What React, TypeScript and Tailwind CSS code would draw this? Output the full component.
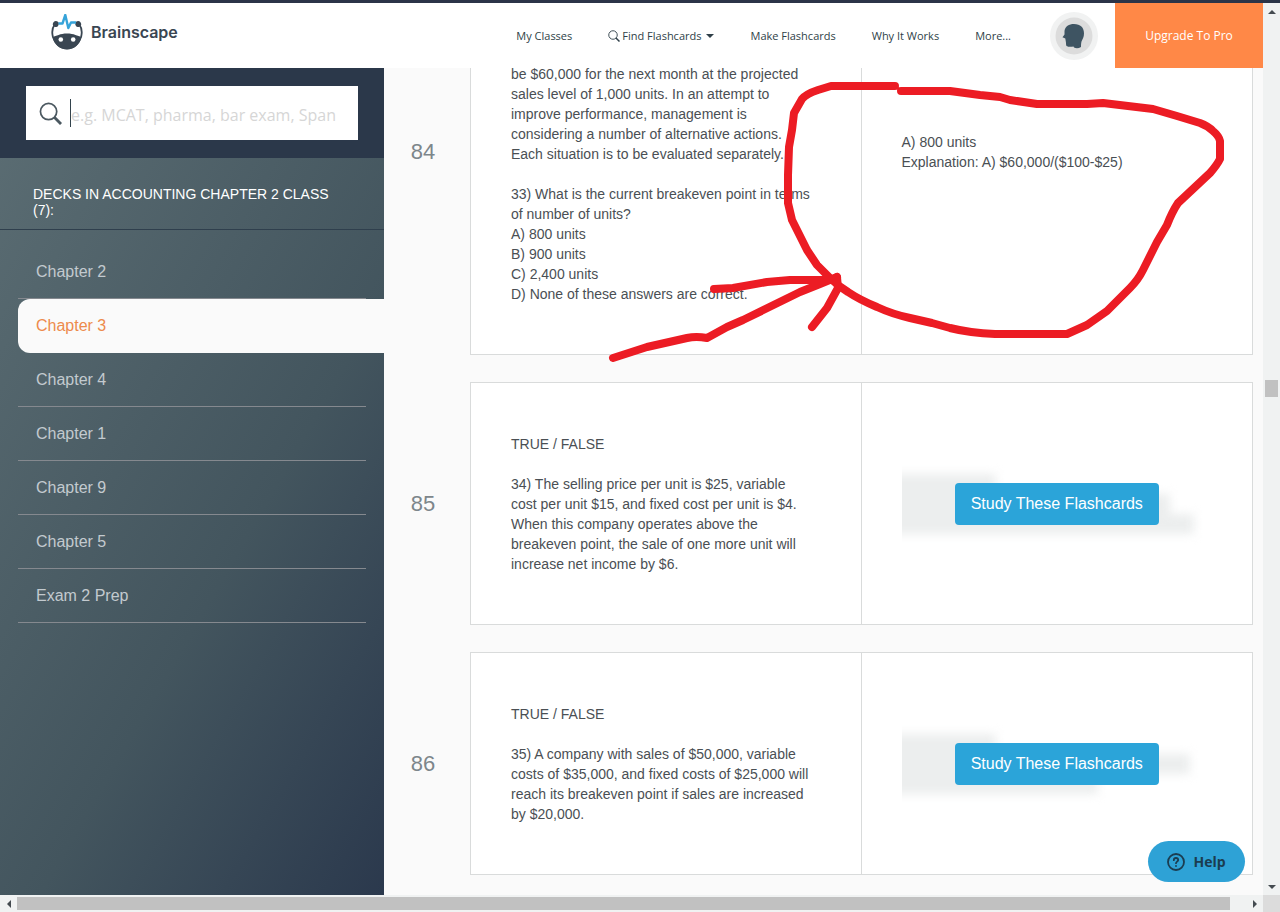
import { useState } from 'react'
import type { ReactNode } from 'react'

type Deck = {
  id: number
  name: string
}

type Flashcard = {
  number: number
  question: string
  answer?: string
  // widths of the blurred lines shown while the answer is locked
  preview?: string[]
}

const decks: Deck[] = [
  { id: 2, name: 'Chapter 2' },
  { id: 3, name: 'Chapter 3' },
  { id: 4, name: 'Chapter 4' },
  { id: 1, name: 'Chapter 1' },
  { id: 9, name: 'Chapter 9' },
  { id: 5, name: 'Chapter 5' },
  { id: 10, name: 'Exam 2 Prep' },
]

const flashcards: Flashcard[] = [
  {
    number: 84,
    question: `be $60,000 for the next month at the projected
sales level of 1,000 units. In an attempt to
improve performance, management is
considering a number of alternative actions.
Each situation is to be evaluated separately.

33) What is the current breakeven point in terms
of number of units?
A) 800 units
B) 900 units
C) 2,400 units
D) None of these answers are correct.`,
    answer: `A) 800 units
Explanation: A) $60,000/($100-$25)`,
  },
  {
    number: 85,
    question: `TRUE / FALSE

34) The selling price per unit is $25, variable
cost per unit $15, and fixed cost per unit is $4.
When this company operates above the
breakeven point, the sale of one more unit will
increase net income by $6.`,
    preview: ['w-[106px]', 'w-[280px]', 'w-[304px]'],
  },
  {
    number: 86,
    question: `TRUE / FALSE

35) A company with sales of $50,000, variable
costs of $35,000, and fixed costs of $25,000 will
reach its breakeven point if sales are increased
by $20,000.`,
    preview: ['w-[106px]', 'w-[300px]', 'w-[208px]'],
  },
]

const Logo = () => (
  <svg viewBox="0 0 32 36" className="w-8 h-9" aria-hidden="true">
    <path
      d="M4 10C1 14 .7 18 1.800 22.500C4 30 9.500 34.500 16 34.500S28 30 30.200 22.500C31.300 18 31 14 28 10"
      fill="none"
      stroke="#3a4652"
      strokeWidth="1.800"
    />
    <path
      d="M1.500 23C5.500 22 9 19.500 16 19.500S26.500 22 30.500 23C29 30.500 23 35.300 16 35.300S3 30.500 1.500 23Z"
      fill="#3a4652"
    />
    <ellipse cx="4.800" cy="10" rx="2.900" ry="3" transform="rotate(25 4.800 10)" fill="#3a4652" />
    <ellipse cx="27.200" cy="10" rx="2.900" ry="3" transform="rotate(-25 27.200 10)" fill="#3a4652" />
    <circle cx="9.800" cy="25.500" r="2.300" fill="#fff" />
    <circle cx="22.200" cy="25.500" r="2.300" fill="#fff" />
    <path
      d="M7.500 9.500H11.500L14.300 1L17.300 14L20 8.500H25"
      fill="none"
      stroke="#36a3d9"
      strokeWidth="2.400"
      strokeLinejoin="round"
    />
  </svg>
)

const Magnifier = ({ className, thick }: { className: string; thick: number }) => (
  <svg viewBox="0 0 24 24" className={className} fill="none" stroke="currentColor" aria-hidden="true">
    <circle cx="10" cy="10" r="8.500" strokeWidth="1.800" />
    <path d="M16 16L23 23" strokeWidth={thick} />
  </svg>
)

const Avatar = () => (
  <svg viewBox="0 0 48 48" className="size-12" aria-hidden="true">
    <circle cx="24" cy="24" r="24" fill="#f1f2f2" />
    <circle cx="24" cy="24" r="18.500" fill="#dcdcdc" />
    <path
      d="M14.500 19C15 14.500 19 12 24 12C30.500 12 34 15.500 34 21.500C34 25 32.500 27 31.500 29.500C31 31.500 31 33.500 31 35C28.500 36.500 26 36.500 24 35.500L23.500 34.500C21 35 18 35 16.500 34C15.800 32.500 16.200 31 15.800 29.500L15.300 26.500L12.500 25.200L14.500 22.500Z"
      fill="#3e5462"
    />
  </svg>
)

const Header = () => (
  <header className="relative z-10 h-[65px] shrink-0 flex items-center bg-white text-[11px] text-[#2f3f48] font-['Open_Sans','Noto_Sans',sans-serif]">
    <a href="#home" className="flex items-center gap-2 pl-[51px] pb-[7px]">
      <Logo />
      <span className="text-base font-semibold text-[#3a4652] font-['Inter',sans-serif]">
        Brainscape
      </span>
    </a>

    <nav className="ml-auto flex items-center gap-9 pr-[39px] pt-px">
      <a href="#classes">My Classes</a>
      <a href="#find" className="flex items-center">
        <Magnifier className="size-3 mr-[2px]" thick={3} />
        Find Flashcards
        <svg viewBox="0 0 8 4" className="w-2 h-1 ml-[5px]" aria-hidden="true">
          <path d="M0 0H8L4 4Z" fill="currentColor" />
        </svg>
      </a>
      <a href="#make">Make Flashcards</a>
      <a href="#why">Why It Works</a>
      <a href="#more">More...</a>
    </nav>

    <button type="button" aria-label="Account" className="mr-[17px]">
      <Avatar />
    </button>
    <a
      href="#pro"
      className="self-stretch w-[148px] flex items-center justify-center bg-[#ff8847] text-white text-xs"
    >
      Upgrade To Pro
    </a>
  </header>
)

const Sidebar = () => {
  const [search, setSearch] = useState('')
  const [active, setActive] = useState(3)

  return (
    <aside className="w-96 shrink-0 flex flex-col bg-linear-120 from-[#5c6e74] via-[#43555e] via-60% to-[#2b394d]">
      <div className="bg-[#2b384a] py-[18px] px-[26px]">
        <label className="h-[54px] flex items-center bg-white pl-[13px] pr-5 text-[#4b5860]">
          <Magnifier className="size-[23px]" thick={3} />
          <span className="ml-2 h-7 border-l border-[#33434d]" />
          <input
            type="text"
            aria-label="Search flashcards"
            placeholder="e.g. MCAT, pharma, bar exam, Span"
            value={search}
            onChange={(e) => setSearch(e.target.value)}
            className="flex-1 min-w-0 pt-1 outline-none text-base placeholder:text-[#d6d6d6] font-['Open_Sans','Noto_Sans',sans-serif]"
          />
        </label>
      </div>

      <h2 className="pt-7 pb-[11px] pl-[33px] pr-10 border-b border-[#2f3f4d] text-sm leading-4 text-white">
        DECKS IN ACCOUNTING CHAPTER 2 CLASS
        <br />
        (7):
      </h2>

      <ul className="pt-[15px] pl-[18px]">
        {decks.map((deck) => (
          <li key={deck.id}>
            <a
              href={`#deck-${deck.id}`}
              onClick={() => setActive(deck.id)}
              className={
                deck.id === active
                  ? 'flex items-center h-[54px] pl-[18px] rounded-l-xl bg-[#fafafa] text-[#ed8a4c]'
                  : 'flex items-center h-[54px] pl-[18px] mr-[18px] border-b border-[#85898f] text-[#c3cacf]'
              }
            >
              {deck.name}
            </a>
          </li>
        ))}
      </ul>
    </aside>
  )
}

const LockedAnswer = ({ preview }: { preview: string[] }) => (
  <div className="relative w-full flex justify-center">
    <div
      className="absolute -inset-y-5 left-0 right-0 overflow-hidden flex flex-col justify-center"
      aria-hidden="true"
    >
      <div className="-ml-3 blur-[5px]">
        {preview.map((width, i) => (
          <div key={i} className={`h-5 bg-[#eceeee] ${width}`} />
        ))}
      </div>
    </div>
    <button
      type="button"
      className="relative h-[42px] px-4 rounded bg-[#2ba4d9] text-white text-base whitespace-nowrap"
    >
      Study These Flashcards
    </button>
  </div>
)

const CardSide = ({ children }: { children: ReactNode }) => (
  <div className="flex items-center min-w-0 px-10 pt-[51px] pb-[50px] whitespace-pre">{children}</div>
)

const CardRow = ({ card }: { card: Flashcard }) => (
  <li className="flex items-stretch">
    <div className="w-[86px] shrink-0 flex items-center justify-center pr-2 text-[22px] text-[#7d868b]">
      {card.number}
    </div>
    <article
      className={
        card.answer
          ? 'flex-1 grid grid-cols-2 min-h-[407px] border border-[#d9dbdb] bg-white'
          : 'flex-1 grid grid-cols-2 border border-[#d9dbdb] bg-white'
      }
    >
      <div className="flex flex-col justify-end border-r border-[#d9dbdb]">
        <CardSide>{card.question}</CardSide>
      </div>
      <CardSide>
        {card.preview ? <LockedAnswer preview={card.preview} /> : card.answer}
      </CardSide>
    </article>
  </li>
)

const Scribble = () => (
  <svg
    viewBox="0 0 1280 912"
    className="absolute -top-[3px] left-0 z-20 w-[1280px] h-[912px] pointer-events-none"
    fill="none"
    stroke="#ec1c24"
    strokeWidth="8"
    strokeLinecap="round"
    strokeLinejoin="round"
    aria-hidden="true"
  >
    <path d="M895 86H831L818 90Q806 94 802 99L794 113L792 130L789 147L788 175V203L792 220L807 250L817 265L830 278Q838 286 848 292Q860 300 877 307Q892 314 910 318L932 323L950 328Q970 333 995 334H1067L1087 325L1107 311L1130 288Q1138 280 1143 270L1157 242L1167 225Q1172 212 1178 203L1210 173Q1217 165 1220 159V141Q1219 136 1213 131Q1208 126 1200 123L1177 116L1153 109L1103 103L1087 104H1037L1010 100L1000 97L980 95L950 91H901" />
    <path d="M613 358L647 347L687 338Q696 336 707 338L727 327L743 320L800 292L820 284L837 277" />
    <path d="M714 289L733 288L767 282L790 280H833L837 277L838 288L827 308L812 327" />
  </svg>
)

const Arrow = ({ d, label }: { d: string; label: string }) => (
  <button
    type="button"
    aria-label={label}
    className="size-[17px] shrink-0 flex items-center justify-center"
  >
    <svg viewBox="0 0 8 8" className="size-2" fill="#444b50" aria-hidden="true">
      <path d={d} />
    </svg>
  </button>
)

const VerticalBar = () => (
  <div className="w-[17px] shrink-0 flex flex-col items-center bg-[#f0f2f2]">
    <Arrow d="M0 6L4 2L8 6Z" label="Scroll up" />
    <div className="grow-3" />
    <div className="w-[13px] h-[17px] bg-[#c1c1c1]" />
    <div className="grow-4" />
    <Arrow d="M0 2L4 6L8 2Z" label="Scroll down" />
  </div>
)

const HorizontalBar = () => (
  <div className="h-[17px] shrink-0 flex items-center bg-[#f0f2f2]">
    <Arrow d="M6 0L2 4L6 8Z" label="Scroll left" />
    <div className="flex-1 h-[13px] mr-4 bg-[#c1c1c1]" />
    <Arrow d="M2 0L6 4L2 8Z" label="Scroll right" />
    <div className="size-[17px] bg-[#dcdcdc]" />
  </div>
)

export default function App() {
  return (
    <div className="relative h-screen flex flex-col overflow-hidden border-t-[3px] border-[#2b3448] bg-[#fafafa] font-['Liberation_Sans',Arial,sans-serif]">
      <div className="flex-1 min-h-0 flex">
        <div className="relative flex-1 min-w-0 flex flex-col">
          <Header />
          <div className="flex-1 min-h-0 flex">
            <Sidebar />
            <main className="flex-1 min-w-0 overflow-hidden pr-[10px] text-sm text-[#4a4f54]">
              <ol className="-mt-[120px] flex flex-col gap-[27px]">
                {flashcards.map((card) => (
                  <CardRow key={card.number} card={card} />
                ))}
              </ol>
            </main>
          </div>
          <button
            type="button"
            className="absolute right-[18px] bottom-[13px] h-[41px] w-[97px] flex items-center justify-center gap-2 rounded-full bg-[#2ea2d6] text-[#1b3c50] text-sm font-bold font-['Open_Sans','Noto_Sans',sans-serif]"
          >
            <svg
              viewBox="0 0 18 18"
              className="size-[18px]"
              fill="none"
              stroke="currentColor"
              strokeWidth="1.800"
              strokeLinecap="round"
              aria-hidden="true"
            >
              <circle cx="9" cy="9" r="8" />
              <path d="M6.800 7.200C6.800 5.800 7.800 5 9 5S11.200 5.800 11.200 7C11.200 8.500 9 8.700 9 10.200" />
              <path d="M9 12.900V13" />
            </svg>
            Help
          </button>
        </div>
        <VerticalBar />
      </div>
      <HorizontalBar />
      <Scribble />
    </div>
  )
}
